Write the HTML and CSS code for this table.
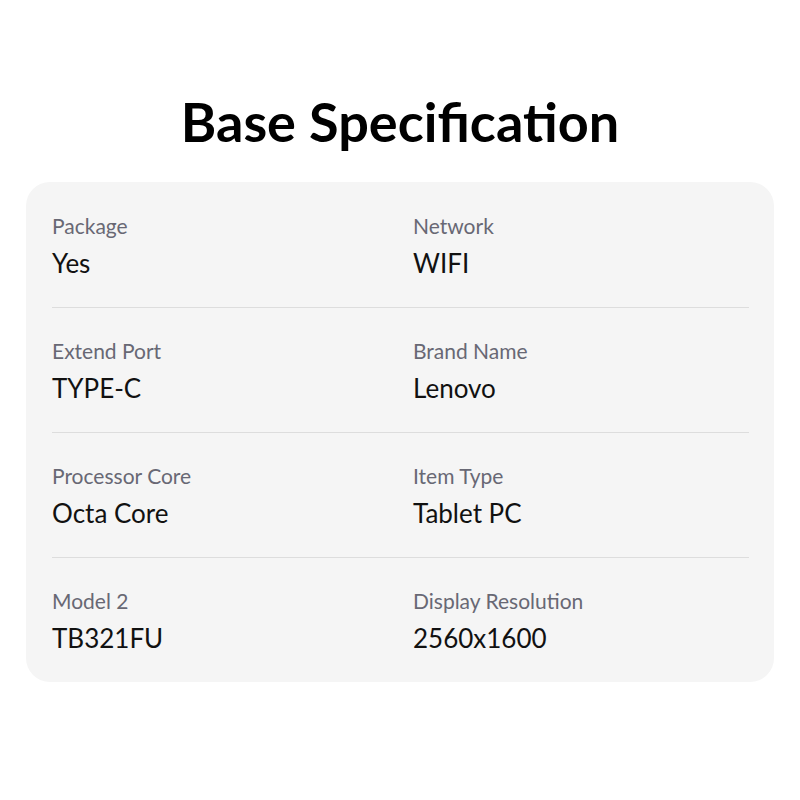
FILE: index.html
```html
<!DOCTYPE html>
<html>
<head>
<meta charset="utf-8">
<link rel="stylesheet" href="styles.css">
</head>
<body>
<div class="page">
  <h1 class="title">Base Specification</h1>
  <div class="card">
    <div class="row">
      <div class="cell"><div class="label">Package</div><div class="value">Yes</div></div>
      <div class="cell"><div class="label">Network</div><div class="value">WIFI</div></div>
    </div>
    <div class="row">
      <div class="cell"><div class="label">Extend Port</div><div class="value">TYPE-C</div></div>
      <div class="cell"><div class="label">Brand Name</div><div class="value">Lenovo</div></div>
    </div>
    <div class="row">
      <div class="cell"><div class="label">Processor Core</div><div class="value">Octa Core</div></div>
      <div class="cell"><div class="label">Item Type</div><div class="value">Tablet PC</div></div>
    </div>
    <div class="row last">
      <div class="cell"><div class="label">Model 2</div><div class="value">TB321FU</div></div>
      <div class="cell"><div class="label">Display Resolution</div><div class="value">2560x1600</div></div>
    </div>
  </div>
</div>
</body>
</html>
```

FILE: styles.css
```css
* { box-sizing: border-box; }
html, body { margin: 0; padding: 0; background: #ffffff; }
body { font-family: Lato, "Noto Sans", sans-serif; color: #111111; }
.page { width: 800px; height: 800px; padding: 87px 26px 0; }
.title {
  margin: 0 0 25px;
  text-align: center;
  font-size: 54px;
  line-height: 70px;
  font-weight: 700;
  color: #000;
}
.card {
  background: #f5f5f5;
  border-radius: 24px;
  padding: 1px 25px 0 26px;
}
.row {
  display: grid;
  grid-template-columns: 361px 1fr;
  padding: 30px 0 29px;
  border-bottom: 1px solid #dddddd;
}
.row.last { border-bottom: none; padding-bottom: 29px; }
.label {
  font-size: 21px;
  line-height: 26px;
  color: #686874;
}
.value {
  margin-top: 9px;
  font-size: 26px;
  line-height: 30px;
  color: #111;
}
```
